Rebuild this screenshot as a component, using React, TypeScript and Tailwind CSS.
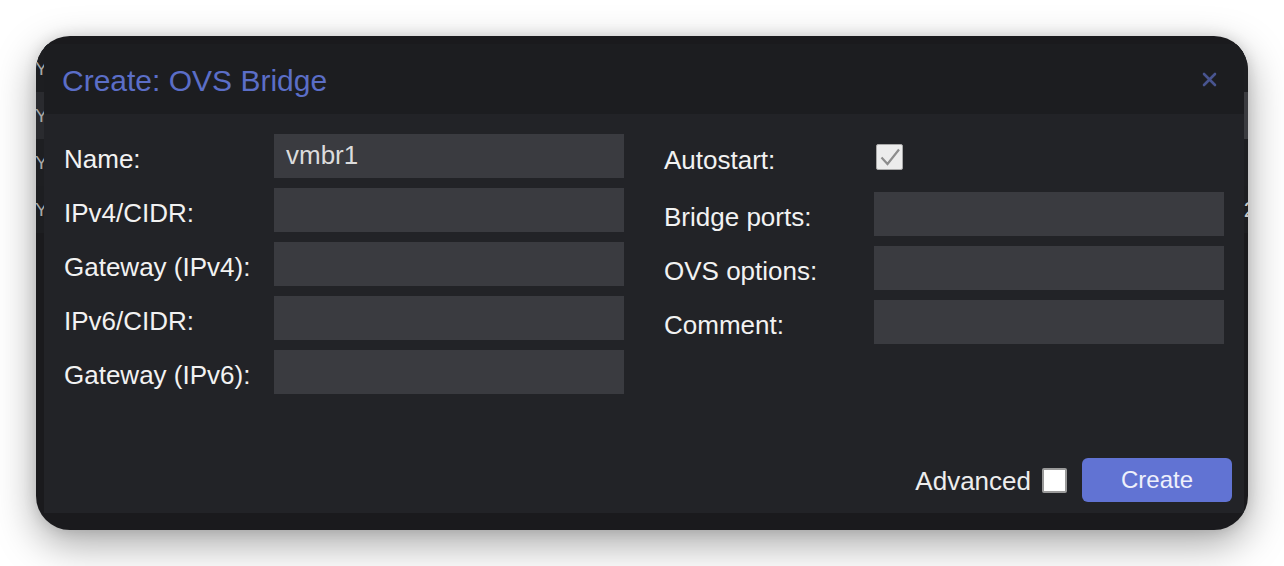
import React from 'react'

const leftFields = ['Name:', 'IPv4/CIDR:', 'Gateway (IPv4):', 'IPv6/CIDR:', 'Gateway (IPv6):']
const rightFields = ['Bridge ports:', 'OVS options:', 'Comment:']

function Field({ label, value }: { label: string; value?: string }) {
  return (
    <div className="flex items-center h-[44px]">
      <div className="w-[210px] pt-[5px] text-[26px] text-[#f2f2f2] leading-none">{label}</div>
      <div className="w-[350px] h-[44px] bg-[#3a3b40] px-3 pt-[8px] text-[26px] leading-none text-[#dcdcdc]">
        {value}
      </div>
    </div>
  )
}

export default function App() {
  return (
    <div
      className="min-h-screen bg-white pt-[36px] pl-[36px]"
      style={{ fontFamily: '"Liberation Sans", Arial, sans-serif' }}
    >
      <div className="relative w-[1212px] h-[494px] rounded-[34px] overflow-hidden bg-[#1a1a1d] shadow-[0_14px_40px_rgba(0,0,0,0.35),0_0_14px_rgba(0,0,0,0.12)]">
        {/* page behind the dialog */}
        <div className="flex flex-col pt-[9px]">
          <div className="h-[47px] flex items-center justify-between bg-[#1d1e21]">
            <span className="-ml-[1px] text-[19px] text-[#a8a8a8] leading-none">Y</span>
          </div>
          <div className="h-[47px] flex items-center justify-between bg-[#2a2b2f]">
            <span className="-ml-[1px] text-[19px] text-[#a8a8a8] leading-none">Y</span>
            <span className="w-[4px] h-full bg-[#3b3c40]" />
          </div>
          <div className="h-[47px] flex items-center bg-[#1e1f22]">
            <span className="-ml-[1px] text-[19px] text-[#a8a8a8] leading-none">Y</span>
          </div>
          <div className="h-[47px] flex items-center justify-between bg-[#1d1e21]">
            <span className="-ml-[1px] text-[19px] text-[#a8a8a8] leading-none">Y</span>
            <span className="-mr-[8px] text-[22px] text-[#c8c8c8] leading-none">2</span>
          </div>
        </div>

        {/* dialog */}
        <div className="absolute left-[8px] top-[8px] w-[1200px] h-[469px] flex flex-col bg-[#222327]">
          <div className="h-[70px] shrink-0 flex items-center justify-between bg-[#1c1d20] pl-[18px] pr-[27px]">
            <div className="pt-[3px] text-[30px] text-[#5b6ec7] leading-none">Create: OVS Bridge</div>
            <svg width="15" height="15" viewBox="0 0 15 15">
              <path d="M2 2 L13 13 M13 2 L2 13" stroke="#48548f" strokeWidth="2.6" strokeLinecap="round" />
            </svg>
          </div>

          <div className="flex-1 grid grid-cols-2 gap-x-10 px-5 pt-5">
            <div className="flex flex-col gap-[10px]">
              {leftFields.map((f, i) => (
                <Field key={f} label={f} value={i === 0 ? 'vmbr1' : undefined} />
              ))}
            </div>
            <div className="flex flex-col gap-[10px]">
              <div className="flex items-center h-[48px] pb-[2px]">
                <div className="w-[212px] pt-[5px] text-[26px] text-[#f2f2f2] leading-none">Autostart:</div>
                <div className="w-[27px] h-[26px] rounded-[2px] border border-[#a8a8a8] bg-[#ececec] flex items-center justify-center">
                  <svg width="22" height="20" viewBox="0 0 22 20">
                    <path d="M2.5 10.5 L8.5 17 L20 2.5" fill="none" stroke="#8d8d8d" strokeWidth="2.2" />
                  </svg>
                </div>
              </div>
              {rightFields.map((f) => (
                <Field key={f} label={f} />
              ))}
            </div>
          </div>

          <div className="flex items-center justify-end pr-3 pb-[11px]">
            <span className="pt-[2px] text-[26px] text-[#ededed] leading-none mr-[11px]">Advanced</span>
            <span className="w-[25px] h-[25px] rounded-[2px] border-2 border-[#9a9a9a] bg-white mr-[15px]" />
            <button className="w-[150px] h-[44px] rounded-[6px] bg-[#6173d3] text-[24px] text-[#eef0fb] leading-none">
              Create
            </button>
          </div>
        </div>
      </div>
    </div>
  )
}
